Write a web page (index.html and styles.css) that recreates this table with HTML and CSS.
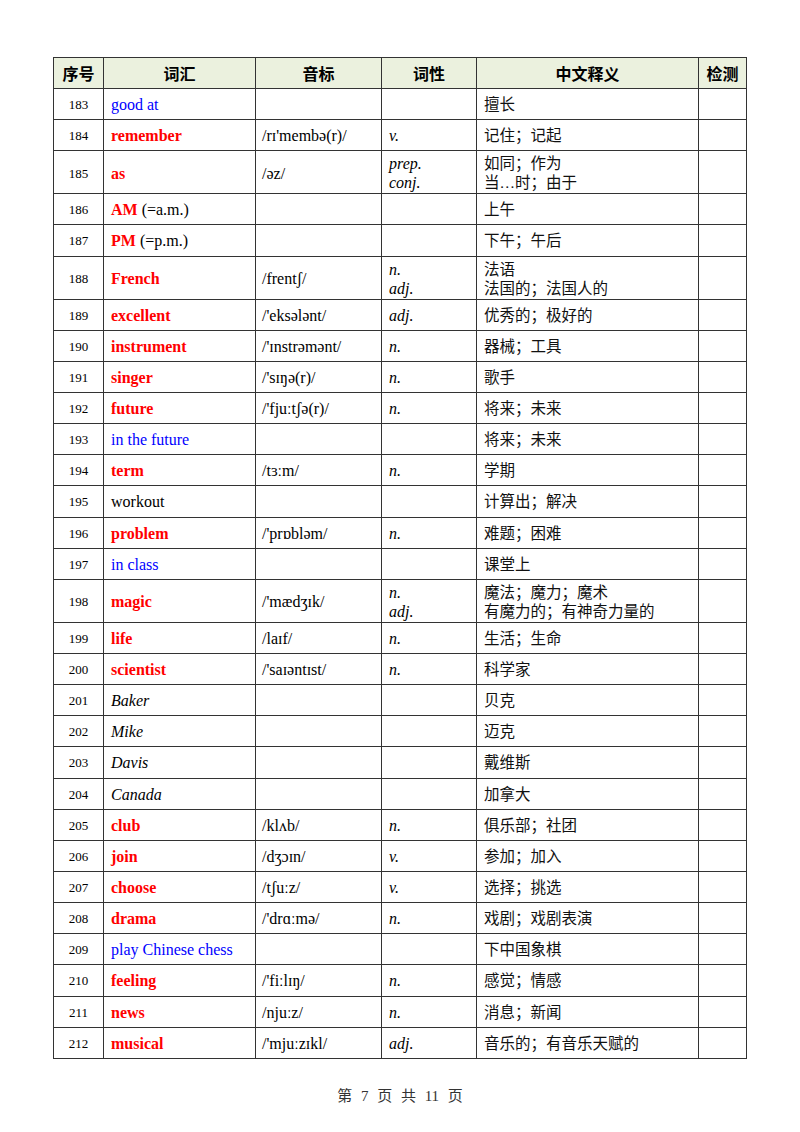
FILE: index.html
```html
<!DOCTYPE html>
<html lang="zh-CN">
<head>
<meta charset="utf-8">
<title>词汇表 第7页</title>
<link rel="stylesheet" href="styles.css">
</head>
<body>
<div class="page">
<table class="vocab">
<colgroup>
<col class="c-no"><col class="c-word"><col class="c-ipa"><col class="c-pos"><col class="c-cn"><col class="c-chk">
</colgroup>
<thead>
<tr><th>序号</th><th>词汇</th><th>音标</th><th>词性</th><th>中文释义</th><th>检测</th></tr>
</thead>
<tbody>
<tr><td class="no">183</td><td class="w phrase">good at</td><td class="ipa"></td><td class="pos"></td><td class="cn">擅长</td><td></td></tr>
<tr><td class="no">184</td><td class="w key">remember</td><td class="ipa">/rɪ'membə(r)/</td><td class="pos">v.</td><td class="cn">记住；记起</td><td></td></tr>
<tr class="tall"><td class="no">185</td><td class="w key">as</td><td class="ipa">/əz/</td><td class="pos">prep.<br>conj.</td><td class="cn">如同；作为<br>当…时；由于</td><td></td></tr>
<tr><td class="no">186</td><td class="w"><span class="key">AM</span> (=a.m.)</td><td class="ipa"></td><td class="pos"></td><td class="cn">上午</td><td></td></tr>
<tr><td class="no">187</td><td class="w"><span class="key">PM</span> (=p.m.)</td><td class="ipa"></td><td class="pos"></td><td class="cn">下午；午后</td><td></td></tr>
<tr class="tall"><td class="no">188</td><td class="w key">French</td><td class="ipa">/frentʃ/</td><td class="pos">n.<br>adj.</td><td class="cn">法语<br>法国的；法国人的</td><td></td></tr>
<tr><td class="no">189</td><td class="w key">excellent</td><td class="ipa">/'eksələnt/</td><td class="pos">adj.</td><td class="cn">优秀的；极好的</td><td></td></tr>
<tr><td class="no">190</td><td class="w key">instrument</td><td class="ipa">/'ɪnstrəmənt/</td><td class="pos">n.</td><td class="cn">器械；工具</td><td></td></tr>
<tr><td class="no">191</td><td class="w key">singer</td><td class="ipa">/'sɪŋə(r)/</td><td class="pos">n.</td><td class="cn">歌手</td><td></td></tr>
<tr><td class="no">192</td><td class="w key">future</td><td class="ipa">/'fjuːtʃə(r)/</td><td class="pos">n.</td><td class="cn">将来；未来</td><td></td></tr>
<tr><td class="no">193</td><td class="w phrase">in the future</td><td class="ipa"></td><td class="pos"></td><td class="cn">将来；未来</td><td></td></tr>
<tr><td class="no">194</td><td class="w key">term</td><td class="ipa">/tɜːm/</td><td class="pos">n.</td><td class="cn">学期</td><td></td></tr>
<tr><td class="no">195</td><td class="w">workout</td><td class="ipa"></td><td class="pos"></td><td class="cn">计算出；解决</td><td></td></tr>
<tr><td class="no">196</td><td class="w key">problem</td><td class="ipa">/'prɒbləm/</td><td class="pos">n.</td><td class="cn">难题；困难</td><td></td></tr>
<tr><td class="no">197</td><td class="w phrase">in class</td><td class="ipa"></td><td class="pos"></td><td class="cn">课堂上</td><td></td></tr>
<tr class="tall"><td class="no">198</td><td class="w key">magic</td><td class="ipa">/'mædʒɪk/</td><td class="pos">n.<br>adj.</td><td class="cn">魔法；魔力；魔术<br>有魔力的；有神奇力量的</td><td></td></tr>
<tr><td class="no">199</td><td class="w key">life</td><td class="ipa">/laɪf/</td><td class="pos">n.</td><td class="cn">生活；生命</td><td></td></tr>
<tr><td class="no">200</td><td class="w key">scientist</td><td class="ipa">/'saɪəntɪst/</td><td class="pos">n.</td><td class="cn">科学家</td><td></td></tr>
<tr><td class="no">201</td><td class="w name">Baker</td><td class="ipa"></td><td class="pos"></td><td class="cn">贝克</td><td></td></tr>
<tr><td class="no">202</td><td class="w name">Mike</td><td class="ipa"></td><td class="pos"></td><td class="cn">迈克</td><td></td></tr>
<tr><td class="no">203</td><td class="w name">Davis</td><td class="ipa"></td><td class="pos"></td><td class="cn">戴维斯</td><td></td></tr>
<tr><td class="no">204</td><td class="w name">Canada</td><td class="ipa"></td><td class="pos"></td><td class="cn">加拿大</td><td></td></tr>
<tr><td class="no">205</td><td class="w key">club</td><td class="ipa">/klʌb/</td><td class="pos">n.</td><td class="cn">俱乐部；社团</td><td></td></tr>
<tr><td class="no">206</td><td class="w key">join</td><td class="ipa">/dʒɔɪn/</td><td class="pos">v.</td><td class="cn">参加；加入</td><td></td></tr>
<tr><td class="no">207</td><td class="w key">choose</td><td class="ipa">/tʃuːz/</td><td class="pos">v.</td><td class="cn">选择；挑选</td><td></td></tr>
<tr><td class="no">208</td><td class="w key">drama</td><td class="ipa">/'drɑːmə/</td><td class="pos">n.</td><td class="cn">戏剧；戏剧表演</td><td></td></tr>
<tr><td class="no">209</td><td class="w phrase">play Chinese chess</td><td class="ipa"></td><td class="pos"></td><td class="cn">下中国象棋</td><td></td></tr>
<tr><td class="no">210</td><td class="w key">feeling</td><td class="ipa">/'fiːlɪŋ/</td><td class="pos">n.</td><td class="cn">感觉；情感</td><td></td></tr>
<tr><td class="no">211</td><td class="w key">news</td><td class="ipa">/njuːz/</td><td class="pos">n.</td><td class="cn">消息；新闻</td><td></td></tr>
<tr><td class="no">212</td><td class="w key">musical</td><td class="ipa">/'mjuːzɪkl/</td><td class="pos">adj.</td><td class="cn">音乐的；有音乐天赋的</td><td></td></tr>
</tbody>
</table>
<p class="footer">第 7 页 共 11 页</p>
</div>
</body>
</html>
```
FILE: styles.css
```css
html, body {
  margin: 0;
  padding: 0;
  background: #ffffff;
}

.page {
  width: 800px;
  height: 1132px;
  box-sizing: border-box;
  padding-top: 57px;
  padding-left: 53px;
  font-family: "Liberation Serif", "Noto Sans CJK SC", serif;
  color: #000;
}

.vocab {
  border-collapse: collapse;
  table-layout: fixed;
  width: 693px;
}

.c-no { width: 50px; }
.c-word { width: 152px; }
.c-ipa { width: 126px; }
.c-pos { width: 95px; }
.c-cn { width: 222px; }
.c-chk { width: 48px; }

.vocab th,
.vocab td {
  border: 1px solid #333;
  padding: 2px 7px 0;
  vertical-align: middle;
  text-align: left;
  font-size: 16px;
  line-height: 20px;
  white-space: nowrap;
  overflow: hidden;
}

.vocab th {
  height: 30px;
  background: #ebf1de;
  text-align: center;
  font-family: "Noto Sans CJK SC", sans-serif;
  font-weight: 700;
  font-size: 16px;
  padding: 0;
}

.vocab td {
  height: 28.15px;
}

.vocab tr.tall td {
  height: 40px;
  line-height: 19px;
}

.vocab td.no {
  text-align: center;
  font-size: 13px;
  padding: 2px 0 0;
}

.vocab td.w { padding-left: 7px; }
.vocab td.ipa { padding-left: 6px; }
.vocab td.pos { font-style: italic; padding-left: 7px; }
.vocab td.cn { padding-left: 7px; font-size: 15.5px; color: #111; }

.key {
  color: #ff0000;
  font-weight: 700;
}

.phrase {
  color: #0000ff;
}

.name {
  font-style: italic;
}

.footer {
  margin: 27px 0 0 -53px;
  width: 800px;
  text-align: center;
  font-size: 15px;
  line-height: 20px;
  word-spacing: 5px;
  color: #333;
}
```
